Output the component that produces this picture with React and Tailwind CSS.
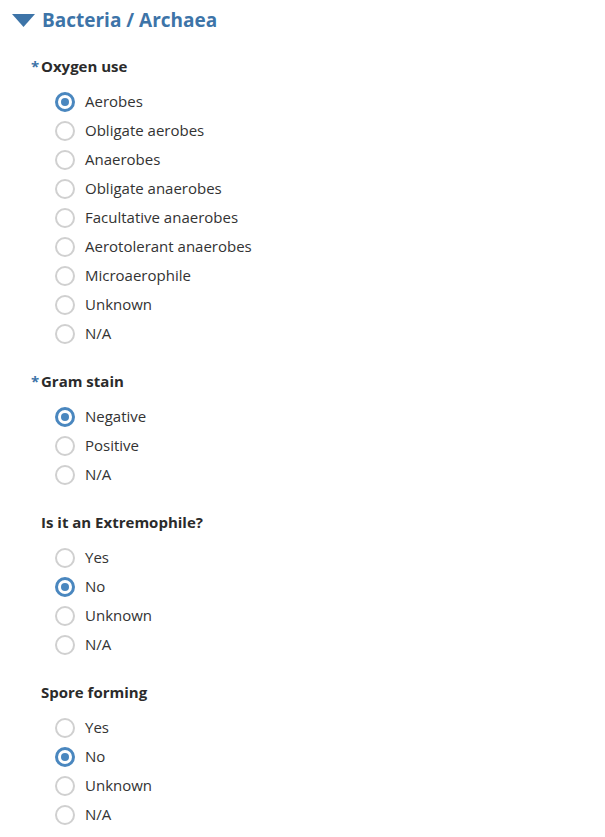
import { useState } from 'react';

const font = { fontFamily: '"Open Sans", "Noto Sans", sans-serif' };

const questions = [
  {
    id: 'oxygen',
    label: 'Oxygen use',
    required: true,
    options: ['Aerobes', 'Obligate aerobes', 'Anaerobes', 'Obligate anaerobes', 'Facultative anaerobes', 'Aerotolerant anaerobes', 'Microaerophile', 'Unknown', 'N/A'],
    value: 'Aerobes',
  },
  {
    id: 'gram',
    label: 'Gram stain',
    required: true,
    options: ['Negative', 'Positive', 'N/A'],
    value: 'Negative',
  },
  {
    id: 'extremophile',
    label: 'Is it an Extremophile?',
    required: false,
    options: ['Yes', 'No', 'Unknown', 'N/A'],
    value: 'No',
  },
  {
    id: 'spore',
    label: 'Spore forming',
    required: false,
    options: ['Yes', 'No', 'Unknown', 'N/A'],
    value: 'No',
  },
];

function Radio({ checked }) {
  return checked ? (
    <span className="flex h-[20px] w-[20px] shrink-0 items-center justify-center rounded-full border-[3px] border-[#4a87bf] bg-white">
      <span className="h-[8px] w-[8px] rounded-full bg-[#4a87bf]"></span>
    </span>
  ) : (
    <span className="h-[20px] w-[20px] shrink-0 rounded-full border-2 border-[#d0d0d0] bg-white"></span>
  );
}

function Question({ q, value, onChange }) {
  return (
    <fieldset className="mb-[23px]">
      <div className="flex h-[20px] items-center pl-[31px] text-[15px] font-bold text-[#2b2b2b]">
        {q.required ? (
          <span className="mr-[2px] w-[8px] text-[#3d74a8]">*</span>
        ) : (
          <span className="mr-[2px] w-[8px]"></span>
        )}
        {q.label}
      </div>
      <div className="mt-[11px] flex flex-col pl-[55px]">
        {q.options.map((opt) => (
          <label
            key={opt}
            className="flex h-[29px] cursor-pointer items-center gap-[10px] text-[15px] text-[#333]"
            onClick={() => onChange(q.id, opt)}
          >
            <Radio checked={value === opt} />
            <span>{opt}</span>
          </label>
        ))}
      </div>
    </fieldset>
  );
}

export default function App() {
  const [answers, setAnswers] = useState(
    Object.fromEntries(questions.map((q) => [q.id, q.value]))
  );

  const handleChange = (id, opt) => {
    setAnswers((prev) => ({ ...prev, [id]: opt }));
  };

  return (
    <div className="min-h-[837px] w-[605px] bg-white" style={font}>
      <div className="flex h-[40px] items-center gap-[7px] pl-[12px] pt-[1px]">
        <svg width="23" height="13" viewBox="0 0 23 13">
          <polygon points="0,0 23,0 11.5,13" fill="#3d74a8" />
        </svg>
        <h2 className="text-[19px] font-bold text-[#3d74a8]">Bacteria / Archaea</h2>
      </div>
      <div className="pt-[16px]">
        {questions.map((q) => (
          <Question key={q.id} q={q} value={answers[q.id]} onChange={handleChange} />
        ))}
      </div>
    </div>
  );
}
